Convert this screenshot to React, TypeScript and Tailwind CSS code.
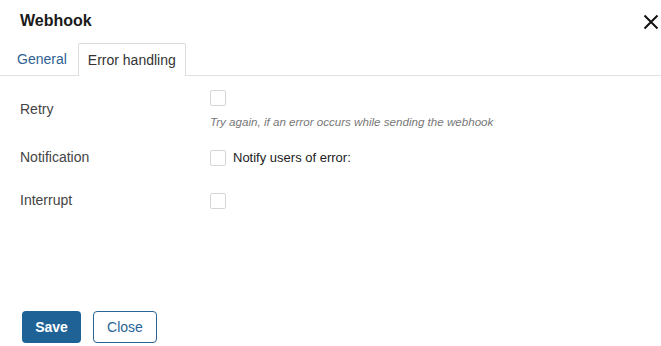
import React from "react"

function Checkbox() {
  return <span className="block h-4 w-4 shrink-0 rounded-[2px] border border-[#d6d6d6] bg-white" />
}

export default function App() {
  return (
    <div className="flex h-[346px] w-[661px] flex-col bg-white font-['Liberation_Sans',Arial,sans-serif] text-[14px] text-[#444]">
      <div className="flex h-[43px] items-start justify-between pl-5 pr-[2px] pt-[11px]">
        <h2 className="text-[16px] font-bold leading-5 text-[#1a1a1a]">Webhook</h2>
        <button className="mt-[3px] h-4 w-4 text-[#111]">
          <svg viewBox="0 0 16 16" className="h-4 w-4" fill="none" stroke="currentColor" strokeWidth="2">
            <path d="M1.5 1.5l13 13M14.5 1.5l-13 13" />
          </svg>
        </button>
      </div>

      <div className="flex h-[33px] border-b border-[#e1e1e1] pl-[6px]">
        <div className="flex h-[32px] items-center px-[11px] text-[#2f6293]">General</div>
        <div className="-mb-px flex h-[33px] items-center rounded-t-[2px] border border-b-0 border-[#dcdcdc] bg-white px-[9px] text-[#333]">
          Error handling
        </div>
      </div>

      <div className="flex flex-col px-5 pt-[14px]">
        <div className="flex items-center">
          <div className="w-[190px]">Retry</div>
          <div className="flex flex-col gap-[9px]">
            <Checkbox />
            <span className="text-[11.6px] italic leading-[14px] text-[#777]">
              Try again, if an error occurs while sending the webhook
            </span>
          </div>
        </div>

        <div className="mt-[18px] flex items-center">
          <div className="w-[190px]">Notification</div>
          <div className="flex items-center gap-[7px]">
            <Checkbox />
            <span className="text-[13px] text-[#222]">Notify users of error:</span>
          </div>
        </div>

        <div className="mt-[22px] flex items-center">
          <div className="w-[190px]">Interrupt</div>
          <Checkbox />
        </div>
      </div>

      <div className="mt-auto flex gap-3 pb-[3px] pl-[22px]">
        <button className="h-[32px] w-[59px] rounded-[4px] bg-[#1f6396] font-bold text-white">Save</button>
        <button className="h-[32px] w-[64px] rounded-[4px] border border-[#2a6496] bg-white text-[#2a6496]">
          Close
        </button>
      </div>
    </div>
  )
}
